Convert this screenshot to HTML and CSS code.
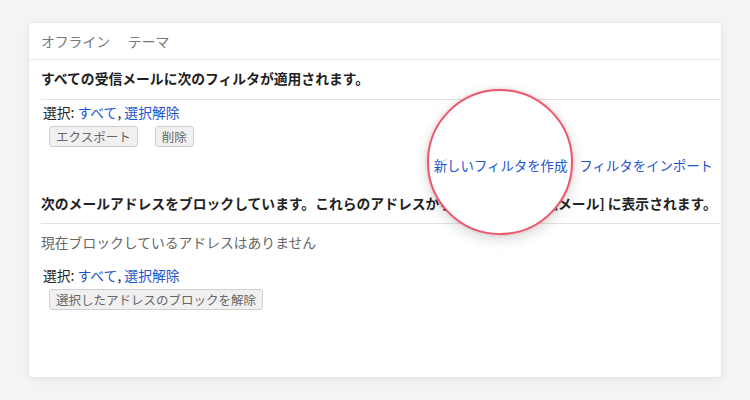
FILE: index.html
```html
<!DOCTYPE html>
<html lang="ja">
<head>
<meta charset="utf-8">
<link rel="stylesheet" href="styles.css">
</head>
<body>
<div class="card">
  <div class="tabs">
    <span class="tab">オフライン</span>
    <span class="tab">テーマ</span>
  </div>
  <div class="content">
    <div class="heading first">すべての受信メールに次のフィルタが適用されます。</div>
    <div class="select">選択: <a class="link">すべて</a>, <a class="link">選択解除</a></div>
    <div class="buttons">
      <span class="btn">エクスポート</span>
      <span class="btn">削除</span>
    </div>
    <div class="actions">
      <a class="link action-top">新しいフィルタを作成</a>
      <a class="link">フィルタをインポート</a>
    </div>
    <div class="heading second">次のメールアドレスをブロックしています。これらのアドレスからのメールは [迷惑メール] に表示されます。</div>
    <div class="empty">現在ブロックしているアドレスはありません</div>
    <div class="select lower">選択: <a class="link">すべて</a>, <a class="link">選択解除</a></div>
    <div class="buttons">
      <span class="btn">選択したアドレスのブロックを解除</span>
    </div>
  </div>
  <div class="lens"></div>
</div>
</body>
</html>
```

FILE: styles.css
```css
* { box-sizing: border-box; }
html, body { margin: 0; padding: 0; }
body {
  background: #f4f4f4;
  font-family: "Noto Sans CJK JP", "Noto Sans", sans-serif;
  font-size: 13.8px;
  color: #222;
  width: 750px;
  height: 400px;
  overflow: hidden;
  padding-top: 23px;
}
.card {
  position: relative;
  margin-left: 29px;
  width: 692px;
  height: 354px;
  background: #fff;
  border-radius: 4px;
  box-shadow: 0 2px 10px rgba(0,0,0,0.07), 0 0 2px rgba(0,0,0,0.05);
}
.tabs {
  display: flex;
  height: 37px;
  line-height: 36px;
  padding-left: 12px;
  border-bottom: 1px solid #e8e8e8;
  color: #777;
}
.tab + .tab { margin-left: 18px; }
.content { padding: 0 1px 0 12px; }
.heading {
  font-weight: bold;
  line-height: 20px;
  border-bottom: 1px solid #e2e2e2;
  color: #222;
  white-space: nowrap;
}
.heading.first { padding: 8px 0 11px; }
.heading.second { padding: 18px 0 10px; }
.select {
  line-height: 20px;
  margin-top: 2px;
  padding-left: 2px;
  color: #222;
}
.select.lower { margin-top: 13px; }
.link { color: #1d55d0; text-decoration: none; }
.buttons {
  display: flex;
  gap: 17px;
  margin-top: 4px;
  padding-left: 8px;
}
.btn {
  display: inline-block;
  height: 21px;
  line-height: 19px;
  padding: 0 6px;
  font-size: 12.5px;
  color: #666;
  background: #f0f0f0;
  border: 1px solid #cfcfcf;
  border-radius: 3px;
}
.actions {
  display: flex;
  justify-content: flex-end;
  gap: 12px;
  margin-top: 8px;
  padding-right: 7px;
  line-height: 20px;
  font-size: 13.4px;
}
.action-top { position: relative; z-index: 2; }
.empty {
  margin-top: 8px;
  line-height: 20px;
  color: #666;
}
.lens {
  position: absolute;
  left: 398px;
  top: 66px;
  width: 146px;
  height: 146px;
  border-radius: 50%;
  background: #fff;
  border: 2.5px solid #e9596f;
  box-shadow: 0 4px 14px rgba(0,0,0,0.16), 0 0 3px rgba(233,89,111,0.35);
  z-index: 1;
}
```
